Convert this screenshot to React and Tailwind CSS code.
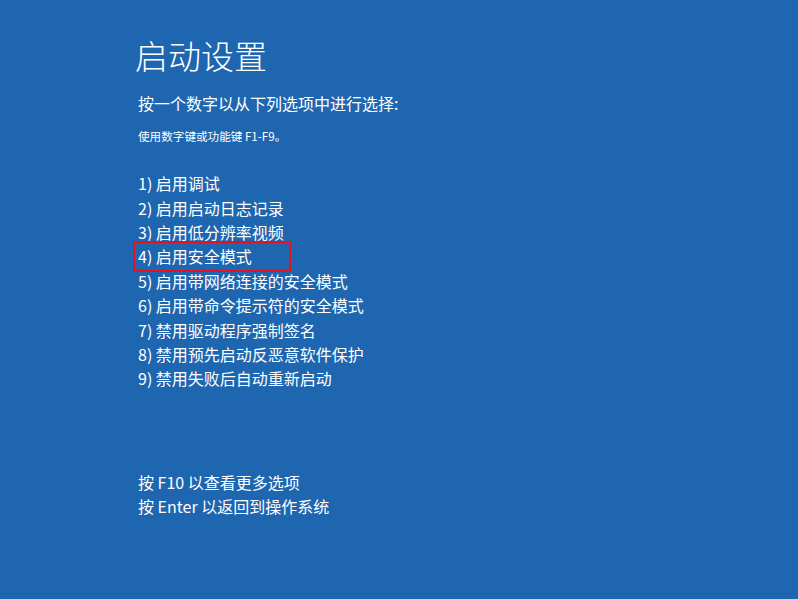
export default function App() {
  const items = [
    "1) 启用调试",
    "2) 启用启动日志记录",
    "3) 启用低分辨率视频",
    "4) 启用安全模式",
    "5) 启用带网络连接的安全模式",
    "6) 启用带命令提示符的安全模式",
    "7) 禁用驱动程序强制签名",
    "8) 禁用预先启动反恶意软件保护",
    "9) 禁用失败后自动重新启动",
  ];
  return (
    <div
      className="w-[798px] h-[599px] bg-[#1e66b0] text-white overflow-hidden pl-[138px]"
      style={{ fontFamily: '"Noto Sans CJK SC", "Noto Sans", sans-serif' }}
    >
      <h1 className="pt-[31px] -ml-[3px] text-[33px] leading-[48px] font-light">启动设置</h1>
      <p className="mt-[12px] text-[16px] leading-[24px]">按一个数字以从下列选项中进行选择:</p>
      <p className="mt-[13px] text-[11.6px] leading-[16px]">使用数字键或功能键 F1-F9。</p>
      <ul className="mt-[27px] flex flex-col">
        {items.map((t, i) => (
          <li key={i} className="h-[24.4px] text-[16px] leading-[24px] flex items-center">
            {i === 3 ? (
              <span className="-ml-[5px] w-[158px] h-[31px] border-2 border-[#ea0f1c] pl-[3px] flex items-center">
                {t}
              </span>
            ) : (
              t
            )}
          </li>
        ))}
      </ul>
      <div className="mt-[79px] text-[16px] leading-[24.5px]">
        <p>按 F10 以查看更多选项</p>
        <p>按 Enter 以返回到操作系统</p>
      </div>
    </div>
  );
}
